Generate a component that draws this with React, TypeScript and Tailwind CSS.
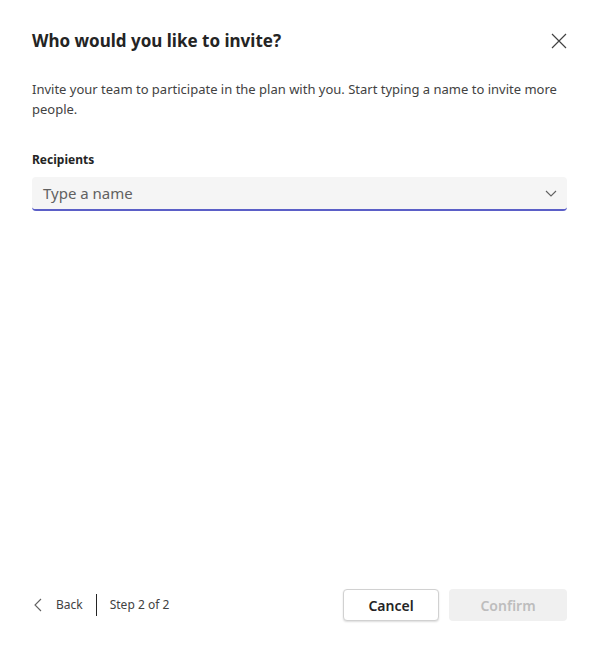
import React from 'react';

const font = { fontFamily: '"Segoe UI", "Noto Sans", "Liberation Sans", sans-serif' };

export default function App() {
  return (
    <div className="flex h-[653px] w-[599px] flex-col bg-white px-8 pb-[32px] pt-[28px] text-[#242424]" style={font}>
      {/* Header */}
      <div className="flex items-center justify-between">
        <h1 className="text-[17px] font-bold leading-[26px]">Who would you like to invite?</h1>
        <button className="-mr-[4px] flex h-6 w-6 items-center justify-center text-[#424242]" title="Close">
          <svg width="18" height="18" viewBox="0 0 18 18" fill="none" stroke="currentColor" strokeWidth="1.2">
            <path d="M2 2 L16 16 M16 2 L2 16" />
          </svg>
        </button>
      </div>

      <p className="mt-[25px] text-[13px] leading-[20px] text-[#424242]">
        Invite your team to participate in the plan with you. Start typing a name to invite more people.
      </p>

      <label className="mt-[32px] text-[12px] font-bold leading-[18px]">Recipients</label>
      <div className="mt-[8px] flex h-[34px] items-center justify-between rounded-[4px] border-b-2 border-[#5b5fc7] bg-[#f5f5f5] pl-[11px] pr-[8px]">
        <span className="text-[15px] text-[#616161]">Type a name</span>
        <svg width="16" height="16" viewBox="0 0 16 16" fill="none" stroke="#616161" strokeWidth="1.1">
          <path d="M3 6 L8 11 L13 6" />
        </svg>
      </div>

      <div className="flex-1" />

      {/* Footer */}
      <div className="flex items-center justify-between">
        <div className="flex items-center text-[12px] text-[#424242]">
          <button className="flex items-center gap-[12px]">
            <svg width="12" height="14" viewBox="0 0 12 14" fill="none" stroke="#616161" strokeWidth="1.1">
              <path d="M9 1 L3 7 L9 13" />
            </svg>
            <span>Back</span>
          </button>
          <div className="ml-[13px] mr-[13px] h-[22px] w-px bg-[#242424]" />
          <span>Step 2 of 2</span>
        </div>
        <div className="flex items-center gap-[10px]">
          <button className="h-[32px] w-[96px] rounded-[4px] border border-[#d1d1d1] bg-white text-[14px] font-semibold shadow-[0_1px_2px_rgba(0,0,0,0.14)]">
            Cancel
          </button>
          <button className="h-[32px] w-[118px] rounded-[4px] bg-[#f0f0f0] text-[14px] font-semibold text-[#bdbdbd]">
            Confirm
          </button>
        </div>
      </div>
    </div>
  );
}
